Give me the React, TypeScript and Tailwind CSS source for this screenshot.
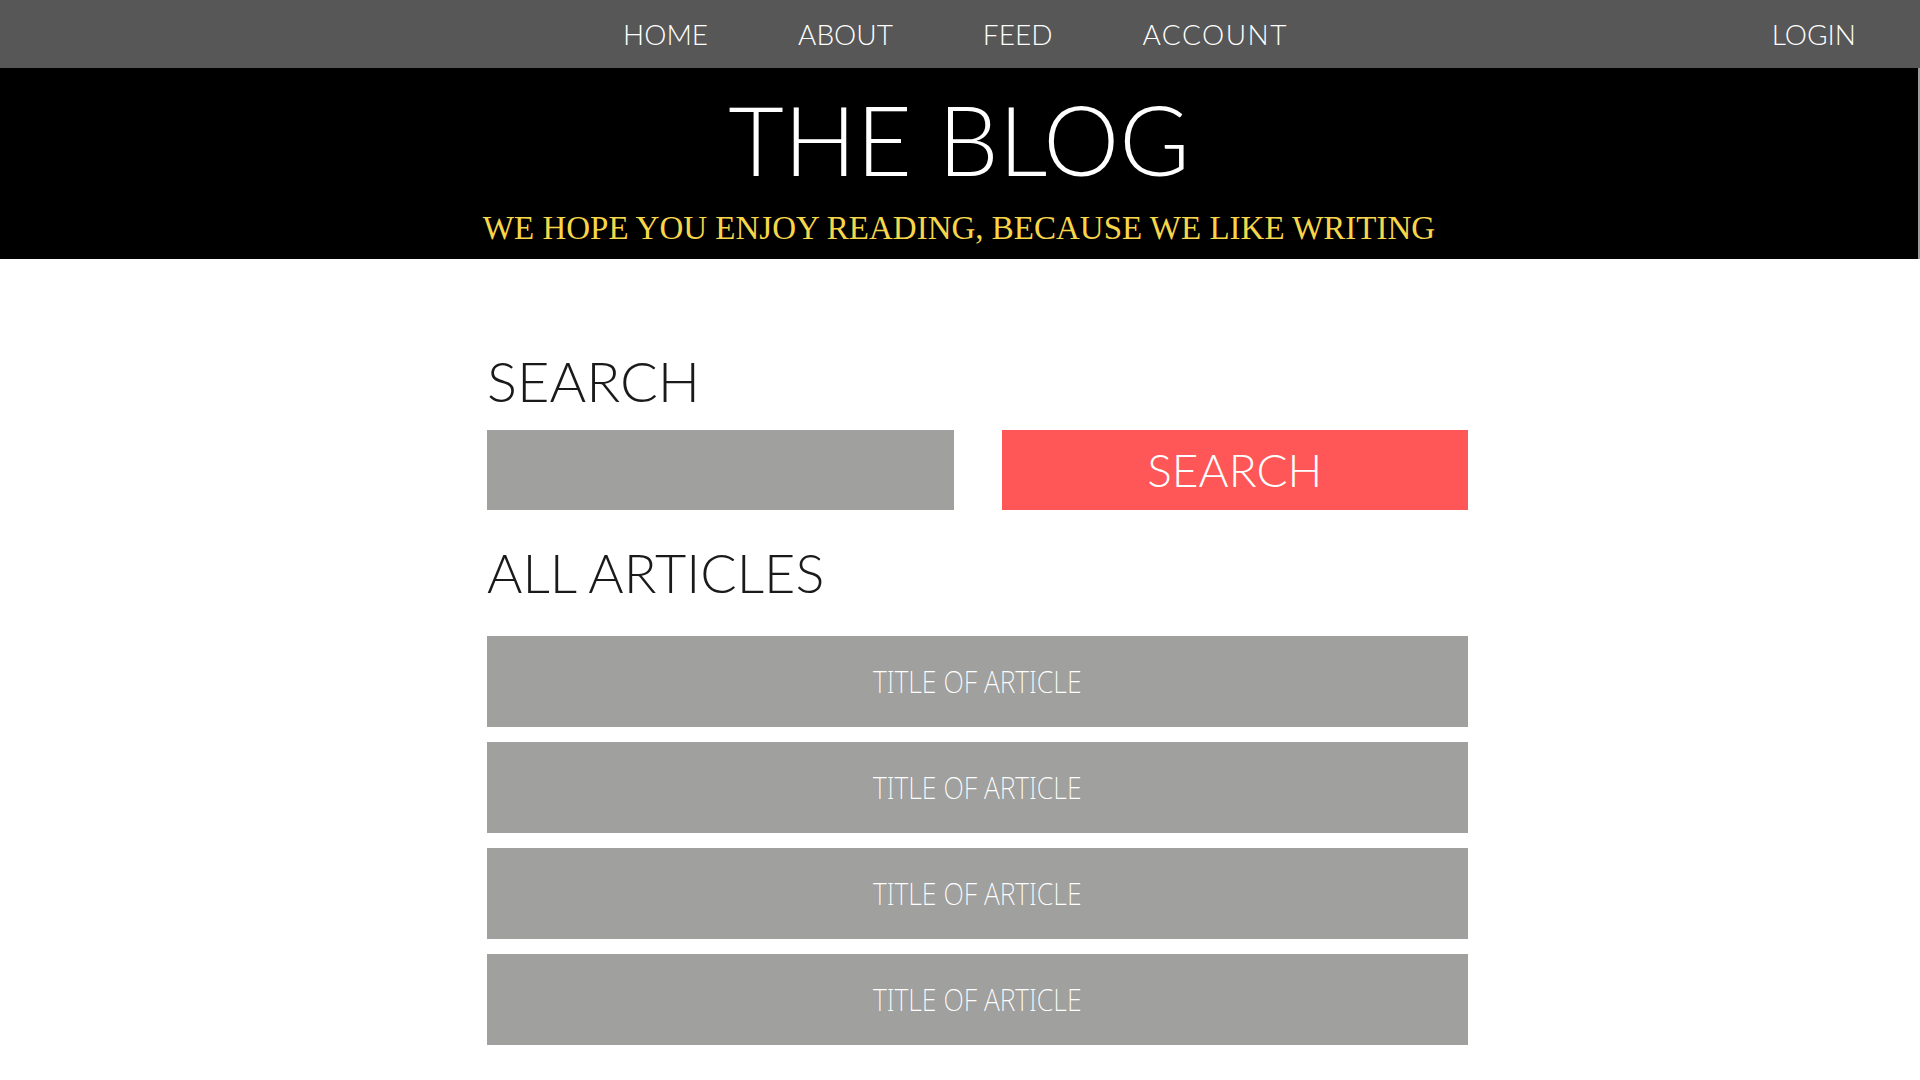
import React from "react";

const navLinks = ["HOME", "ABOUT", "FEED", "ACCOUNT"];
const articles = ["TITLE OF ARTICLE", "TITLE OF ARTICLE", "TITLE OF ARTICLE", "TITLE OF ARTICLE"];

export default function App() {
  return (
    <div className="min-h-screen w-full bg-white font-['Lato','Liberation_Sans',sans-serif]">
      {/* top nav */}
      <nav className="relative flex h-[68px] items-center justify-center bg-[#575757] text-white">
        <ul className="flex items-center gap-[90px] pr-[9px]">
          {navLinks.map((link) => (
            <li
              key={link}
              className={
                link === "ACCOUNT"
                  ? "text-[28px] font-light leading-none tracking-[1.5px]"
                  : "text-[28px] font-light leading-none"
              }
            >
              {link}
            </li>
          ))}
        </ul>
        <a className="absolute right-[64px] top-1/2 -translate-y-1/2 text-[28px] font-light leading-none">
          LOGIN
        </a>
      </nav>

      {/* banner */}
      <header className="flex h-[191px] flex-col items-center border-r-2 border-[#9a9a9a] bg-black">
        <h1 className="mt-[23px] text-[96px] font-light leading-none text-white">THE BLOG</h1>
        <p className="mt-[25px] font-['Liberation_Serif',serif] text-[33px] leading-none text-[#f7d64a]">
          WE HOPE YOU ENJOY READING, BECAUSE WE LIKE WRITING
        </p>
      </header>

      <main className="ml-[487px] w-[981px] pt-[94px] pb-10">
        <h2 className="text-[56px] font-light leading-none text-[#1a1a1a]">SEARCH</h2>

        <div className="mt-[21px] grid grid-cols-2 gap-[48px]">
          <input
            type="text"
            className="h-[80px] bg-[#a0a09e] px-4 text-2xl text-white outline-none"
          />
          <button className="h-[80px] bg-[#ff5757] text-[46px] font-light leading-none text-white">
            SEARCH
          </button>
        </div>

        <h2 className="mt-[36px] text-[54px] font-light leading-none text-[#1a1a1a]">ALL ARTICLES</h2>

        <div className="mt-[36px] flex flex-col gap-[15px]">
          {articles.map((title, i) => (
            <div
              key={i}
              className="flex h-[91px] items-center justify-center bg-[#a0a09e] text-white"
            >
              <span className="inline-block scale-x-[0.86] font-['Noto_Sans',sans-serif] text-[31px] font-extralight">
                {title}
              </span>
            </div>
          ))}
        </div>
      </main>
    </div>
  );
}
